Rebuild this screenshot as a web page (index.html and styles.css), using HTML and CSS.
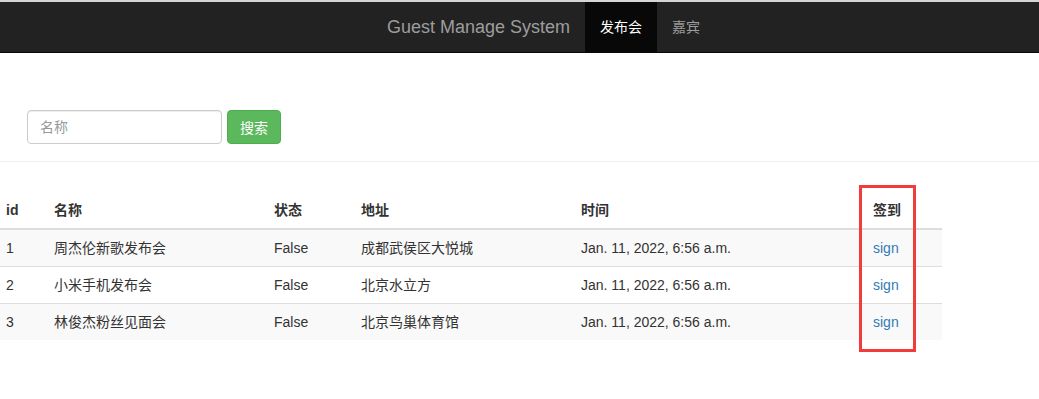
FILE: index.html
```html
<!DOCTYPE html>
<html>
<head>
  <meta charset="utf-8">
  <link rel="stylesheet" href="styles.css">
</head>
<body>
  <nav class="navbar">
    <div class="navbar-inner">
      <a class="brand" href="#">Guest Manage System</a>
      <ul class="nav">
        <li class="active"><a href="#">发布会</a></li>
        <li><a href="#">嘉宾</a></li>
      </ul>
    </div>
  </nav>

  <div class="page">
    <form class="search-form">
      <input type="text" class="search-input" placeholder="名称">
      <button type="button" class="btn-success">搜索</button>
    </form>
    <hr class="divider">

    <table class="event-table">
      <thead>
        <tr>
          <th class="col-id">id</th>
          <th class="col-name">名称</th>
          <th class="col-status">状态</th>
          <th class="col-addr">地址</th>
          <th class="col-time">时间</th>
          <th class="col-sign">签到</th>
        </tr>
      </thead>
      <tbody>
        <tr>
          <td>1</td>
          <td>周杰伦新歌发布会</td>
          <td>False</td>
          <td>成都武侯区大悦城</td>
          <td>Jan. 11, 2022, 6:56 a.m.</td>
          <td><a href="#">sign</a></td>
        </tr>
        <tr>
          <td>2</td>
          <td>小米手机发布会</td>
          <td>False</td>
          <td>北京水立方</td>
          <td>Jan. 11, 2022, 6:56 a.m.</td>
          <td><a href="#">sign</a></td>
        </tr>
        <tr>
          <td>3</td>
          <td>林俊杰粉丝见面会</td>
          <td>False</td>
          <td>北京鸟巢体育馆</td>
          <td>Jan. 11, 2022, 6:56 a.m.</td>
          <td><a href="#">sign</a></td>
        </tr>
      </tbody>
    </table>

    <div class="highlight-box"></div>
  </div>
</body>
</html>
```

FILE: styles.css
```css
body {
  margin: 0;
  padding: 0;
  font-family: "Liberation Sans", Arial, "Noto Sans CJK SC", sans-serif;
  font-size: 14px;
  line-height: 20px;
  color: #333;
  background-color: #fff;
  border-top: 2px solid #d6d6d6;
}

a {
  text-decoration: none;
}

.navbar {
  background-color: #222;
  border-bottom: 1px solid #080808;
  height: 50px;
}

.navbar-inner {
  display: flex;
  height: 50px;
  padding-left: 372px;
}

.brand {
  padding: 15px;
  font-size: 18px;
  line-height: 20px;
  color: #9d9d9d;
}

.nav {
  display: flex;
  list-style: none;
  margin: 0;
  padding: 0;
}

.nav a {
  display: block;
  padding: 15px;
  color: #9d9d9d;
  line-height: 20px;
}

.nav .active a {
  color: #fff;
  background-color: #080808;
}

.page {
  position: relative;
  padding-bottom: 40px;
}

.search-form {
  display: flex;
  gap: 5px;
  padding: 57px 0 0 27px;
  margin: 0;
}

.search-input {
  box-sizing: border-box;
  width: 195px;
  height: 34px;
  padding: 6px 12px;
  font-family: inherit;
  font-size: 14px;
  color: #555;
  border: 1px solid #ccc;
  border-radius: 4px;
  box-shadow: inset 0 1px 1px rgba(0, 0, 0, 0.075);
}

.search-input::placeholder {
  color: #999;
}

.btn-success {
  box-sizing: border-box;
  width: 54px;
  height: 34px;
  padding: 6px 12px;
  font-family: inherit;
  font-size: 14px;
  color: #fff;
  background-color: #5cb85c;
  border: 1px solid #4cae4c;
  border-radius: 4px;
}

.divider {
  margin: 17px 0 0 0;
  border: 0;
  border-top: 1px solid #eee;
}

.event-table {
  border-collapse: collapse;
  border-spacing: 0;
  width: 944px;
  margin: 30px 0 0 -2px;
  table-layout: fixed;
}

.event-table th,
.event-table td {
  padding: 8px;
  text-align: left;
  line-height: 20px;
  vertical-align: top;
}

.event-table th {
  font-weight: bold;
  border-bottom: 2px solid #ddd;
}

.event-table td {
  border-top: 1px solid #ddd;
}

.event-table tbody tr:nth-child(odd) {
  background-color: #f9f9f9;
}

.event-table td a {
  color: #337ab7;
}

.col-id { width: 32px; }
.col-name { width: 204px; }
.col-status { width: 71px; }
.col-addr { width: 204px; }
.col-time { width: 276px; }
.col-sign { width: 61px; }

.highlight-box {
  position: absolute;
  left: 859px;
  top: 132px;
  width: 51px;
  height: 161px;
  border: 3px solid #f23c3c;
}
```
